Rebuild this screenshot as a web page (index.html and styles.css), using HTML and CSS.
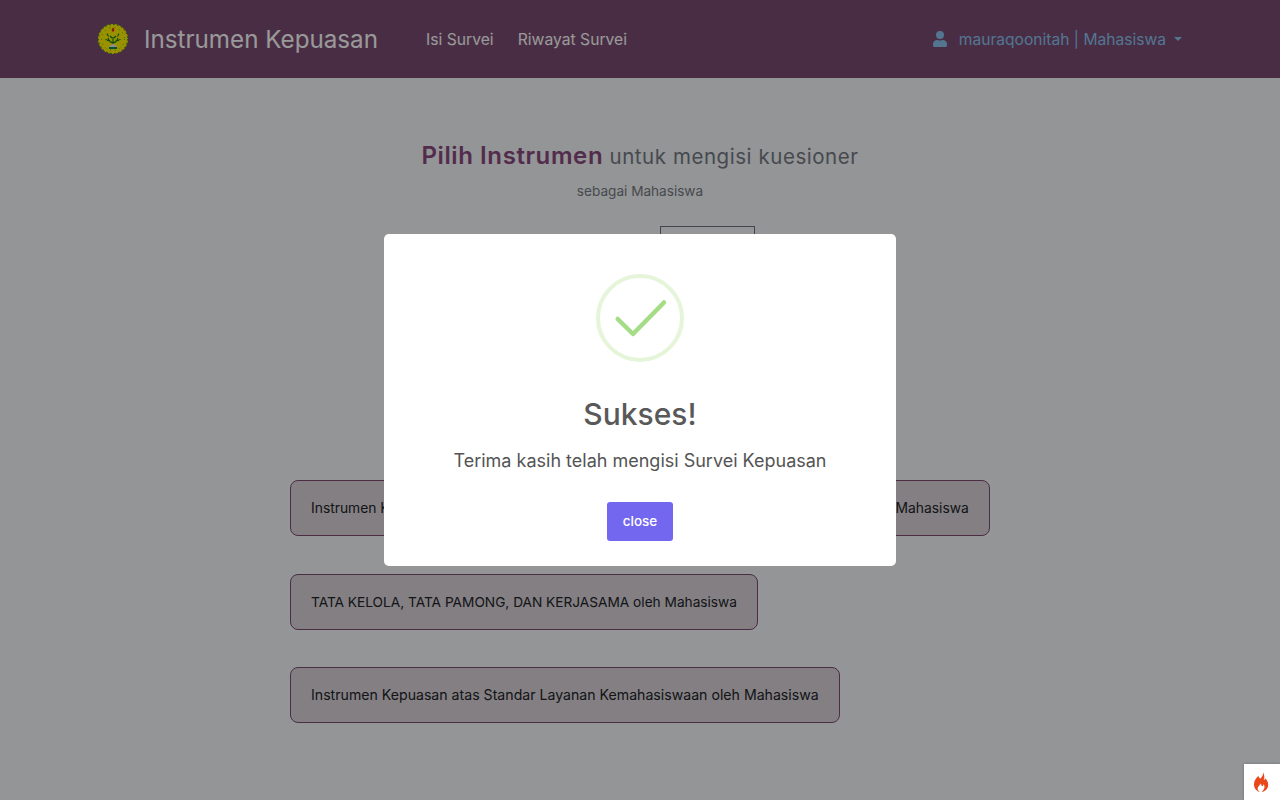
FILE: index.html
```html
<!DOCTYPE html>
<html lang="id">
<head>
<meta charset="utf-8">
<title>Instrumen Kepuasan</title>
<link rel="stylesheet" href="styles.css">
</head>
<body>
<nav class="navbar">
  <div class="brand">
    <svg class="logo" width="32" height="32" viewBox="0 0 32 32">
      <circle cx="16" cy="16" r="15" fill="#fff200"/>
      <circle cx="16" cy="16" r="14.500" fill="none" stroke="#0a7a20" stroke-width="1" stroke-dasharray="1.500 2.500"/>
      <circle cx="16" cy="16" r="11.500" fill="none" stroke="#0a7a20" stroke-width=".6" stroke-dasharray="1 4"/>
      <path d="M16 4.500c1.800 1.500 1.800 3.500 0 4.500c-1.800-1-1.800-3 0-4.500z" fill="#e8301a"/>
      <path d="M16 23V14M16 20c-2-.5-4-2-5-5M16 20c2-.5 4-2 5-5M11.500 18c-1-1-2-1.500-3-1.500M20.500 18c1-1 2-1.500 3-1.500M10 10.500l1.500 3M22 10.500l-1.500 3M13 13l2 2M19 13l-2 2" fill="none" stroke="#0a7a20" stroke-width="1.100"/>
      <path d="M12 24l4-3.500 4 3.500z" fill="#efefef"/>
      <path d="M12 24h8v2h-8z" fill="#0a8a55"/>
    </svg>
    <span class="brand-name">Instrumen Kepuasan</span>
  </div>
  <ul class="nav-links">
    <li>Isi Survei</li>
    <li>Riwayat Survei</li>
  </ul>
  <div class="user">
    <svg class="user-icon" width="14" height="16" viewBox="0 0 448 512"><path fill="currentColor" d="M224 256a128 128 0 1 0 0-256 128 128 0 0 0 0 256zm89.600 32h-16.700a174 174 0 0 1-145.800 0h-16.700A134.400 134.400 0 0 0 0 422.400V464a48 48 0 0 0 48 48h352a48 48 0 0 0 48-48v-41.600A134.400 134.400 0 0 0 313.600 288z"/></svg>
    <span>mauraqoonitah | Mahasiswa</span>
    <span class="caret"></span>
  </div>
</nav>
<main class="content">
  <h1 class="title"><strong>Pilih Instrumen</strong> untuk mengisi kuesioner</h1>
  <p class="subtitle">sebagai Mahasiswa</p>
  <div class="filter-row"><div class="filter-box"></div></div>
  <div class="list">
    <a class="item item-first">Instrumen Kepuasan atas Standar Pendidikan dan Pembelajaran, Suasana Akademik oleh Mahasiswa</a>
    <a class="item item-caps">TATA KELOLA, TATA PAMONG, DAN KERJASAMA oleh Mahasiswa</a>
    <a class="item item-last">Instrumen Kepuasan atas Standar Layanan Kemahasiswaan oleh Mahasiswa</a>
  </div>
</main>
<div class="overlay">
  <div class="modal">
    <svg class="check" width="88" height="88" viewBox="0 0 88 88">
      <circle cx="44" cy="44" r="42" fill="none" stroke="#e6f5d9" stroke-width="4"/>
      <path d="M21.700 45L37 60L68 28.500" fill="none" stroke="#a5dc86" stroke-width="4.500" stroke-linecap="round" stroke-linejoin="round"/>
    </svg>
    <h2 class="modal-title">Sukses!</h2>
    <p class="modal-text">Terima kasih telah mengisi Survei Kepuasan</p>
    <button class="close-btn">close</button>
  </div>
</div>
<div class="ci-badge">
  <svg width="16" height="20" viewBox="0 0 18 21" preserveAspectRatio="none"><path fill="#e8481c" d="M10 0c1 3-1 5-3 7C5 5 5 5 5 4 2 7 0 9 0 13c0 4 3 7 6.500 8-2-1.500-3-3-2-5 .6-1.500 2-2 3-4 1 1 .5 2.500 2 3 1-.5 1-1.500 1-2.500 1.500 1.500 2 3.500.5 5.500-.5 1-1.500 2-2.500 3 4-.8 7.500-3.500 7.500-8 0-3-2-4.500-3-6.500-.5 1-1 1.500-2 2C12 6 12 3 10 0z"/></svg>
</div>
</body>
</html>
```
FILE: styles.css
```css
* { box-sizing: border-box; }
html, body { margin: 0; height: 100%; }
body {
  height: 800px;
  overflow: hidden;
  background: #f6f8fa;
  font-family: Inter, "Noto Sans", sans-serif;
  color: #212529;
}
.navbar {
  height: 78px;
  background: #7a4c73;
  display: flex;
  align-items: center;
  padding: 0 98px 0 97px;
}
.brand { display: flex; align-items: center; gap: 15px; color: #fff; }
.logo { display: block; }
.brand-name { font-size: 24.200px; padding-top: 1px; }
.nav-links {
  display: flex;
  gap: 24px;
  list-style: none;
  margin: 0 0 0 48px;
  padding: 0;
  color: #fff;
  font-size: 15.700px;
}
.user {
  margin-left: auto;
  display: flex;
  align-items: center;
  color: #8bc4f0;
  font-size: 15.600px;
}
.user-icon { margin-right: 12px; }
.caret {
  margin-left: 8px;
  width: 0;
  height: 0;
  border-left: 4.500px solid transparent;
  border-right: 4.500px solid transparent;
  border-top: 4.500px solid currentColor;
}
.content { display: flex; flex-direction: column; align-items: center; padding-top: 63px; }
.title { margin: 0; font-size: 20.500px; font-weight: 400; color: #777b85; line-height: 30px; letter-spacing: .55px; }
.title strong { color: #8a4a80; font-weight: 600; font-size: 24px; letter-spacing: .6px; }
.subtitle { margin: 9px 0 0; font-size: 13.600px; line-height: 20px; color: #777b85; }
.filter-row { width: 700px; height: 60px; margin-top: 25px; padding-left: 370px; }
.filter-box { width: 95px; height: 38px; border: 1px solid #6c757d; }
.list { width: 700px; margin-top: 194px; display: flex; flex-direction: column; align-items: flex-start; gap: 37.500px; }
.item {
  display: block;
  padding: 17px 20px;
  line-height: 20px;
  color: #212529;
  background: #dcd4da;
  border: 1px solid #7d4c75;
  border-radius: 8px;
  white-space: nowrap;
}
.item-first { font-size: 13.840px; }
.item-caps { font-size: 13.680px; }
.item-last { font-size: 14.140px; }
.overlay {
  position: fixed;
  inset: 0;
  background: rgba(0, 0, 0, .4);
  display: flex;
  align-items: center;
  justify-content: center;
}
.modal {
  width: 512px;
  height: 332px;
  background: #fff;
  border-radius: 5px;
  display: flex;
  flex-direction: column;
  align-items: center;
  padding-top: 40px;
}
.check { display: block; }
.modal-title { margin: 34px 0 0; font-size: 30px; line-height: 36px; font-weight: 500; color: #595959; }
.modal-text { margin: 16px 0 0; font-size: 18px; line-height: 26px; color: #545454; }
.close-btn {
  margin-top: 28px;
  width: 66px;
  height: 39px;
  padding: 0 0 2px;
  border: 0;
  border-radius: 3px;
  background: #7367f0;
  color: #fff;
  font: 500 13.500px Inter, sans-serif;
}
.ci-badge {
  position: fixed;
  right: 0;
  bottom: 0;
  width: 36px;
  height: 36px;
  background: #fff;
  box-shadow: 0 0 3px rgba(0, 0, 0, .25);
  display: flex;
  align-items: center;
  justify-content: center;
}
```
